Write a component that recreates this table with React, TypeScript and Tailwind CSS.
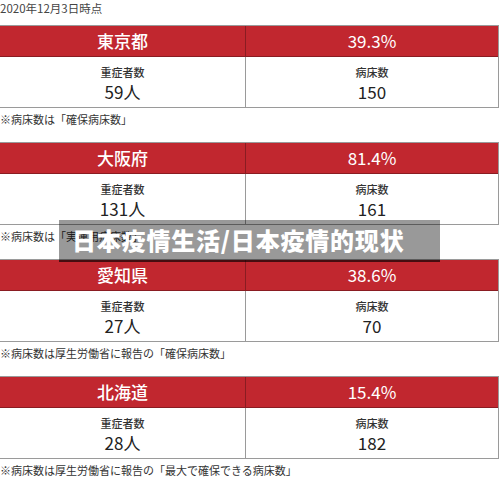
const rows = [
  { pref: "東京都", rate: "39.3%", severe: "59人", beds: "150", note: "※病床数は「確保病床数」" },
  { pref: "大阪府", rate: "81.4%", severe: "131人", beds: "161", note: "※病床数は「実運用病床数」" },
  { pref: "愛知県", rate: "38.6%", severe: "27人", beds: "70", note: "※病床数は厚生労働省に報告の「確保病床数」" },
  { pref: "北海道", rate: "15.4%", severe: "28人", beds: "182", note: "※病床数は厚生労働省に報告の「最大で確保できる病床数」" },
];

export default function App() {
  return (
    <main
      className="relative h-[484px] w-[500px] overflow-hidden bg-white text-[#222]"
      style={{ fontFamily: '"Noto Sans CJK JP", "Noto Sans", sans-serif' }}
    >
      <div className="h-[25px] text-[11.5px] leading-[17px] text-[#444]">2020年12月3日時点</div>

      {rows.map((row) => (
        <div key={row.pref}>
          <div className="ml-[-1px] w-[500px] border border-[#9a9a9a]">
            <div className="grid h-[31px] grid-cols-[246px_1fr] border-b border-[#8a1c22] bg-[#c1272f] text-[17px] text-white">
              <div className="flex items-center justify-center border-r border-[#8a1c22] font-medium">{row.pref}</div>
              <div className="flex items-center justify-center">{row.rate}</div>
            </div>
            <div className="grid h-[50px] grid-cols-[246px_1fr]">
              <div className="flex flex-col items-center justify-center border-r border-[#9a9a9a] pt-[3px]">
                <p className="text-[11px] font-medium leading-[16px] text-[#333]">重症者数</p>
                <p className="text-[17px] leading-[24px] text-[#222]">{row.severe}</p>
              </div>
              <div className="flex flex-col items-center justify-center pt-[3px]">
                <p className="text-[11px] font-medium leading-[16px] text-[#333]">病床数</p>
                <p className="text-[17px] leading-[24px] text-[#222]">{row.beds}</p>
              </div>
            </div>
          </div>
          <p className="h-[34px] pt-[3px] text-[11px] leading-[16px] text-[#333]">{row.note}</p>
        </div>
      ))}

      <div className="absolute left-[59px] top-[220px] flex h-[42px] w-[381px] items-center border-b-2 border-black/40 bg-black/40 pl-[13px]">
        <span className="text-[24px] font-black leading-none tracking-[0.8px] text-white">日本疫情生活/日本疫情的现状</span>
      </div>
    </main>
  );
}
